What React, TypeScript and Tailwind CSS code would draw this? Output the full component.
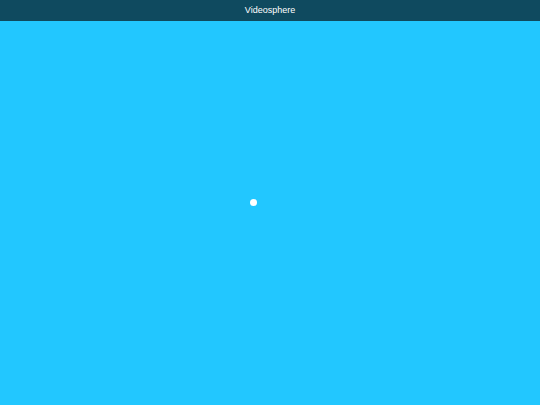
import React from "react";

export default function App() {
  return (
    <div className="w-[540px] h-[405px] flex flex-col bg-[#22c7ff]" style={{ fontFamily: '"Helvetica Neue", "Liberation Sans", Arial, sans-serif' }}>
      <div className="h-[21px] bg-[#0f4a5f] flex items-center justify-center text-white text-[9px]" style={{ fontFamily: '"Liberation Sans", Arial, sans-serif' }}>
        Videosphere
      </div>
      <div className="flex-1 relative">
        <div className="absolute left-[250px] top-[178px] w-[7px] h-[7px] rounded-full bg-white" />
      </div>
    </div>
  );
}
